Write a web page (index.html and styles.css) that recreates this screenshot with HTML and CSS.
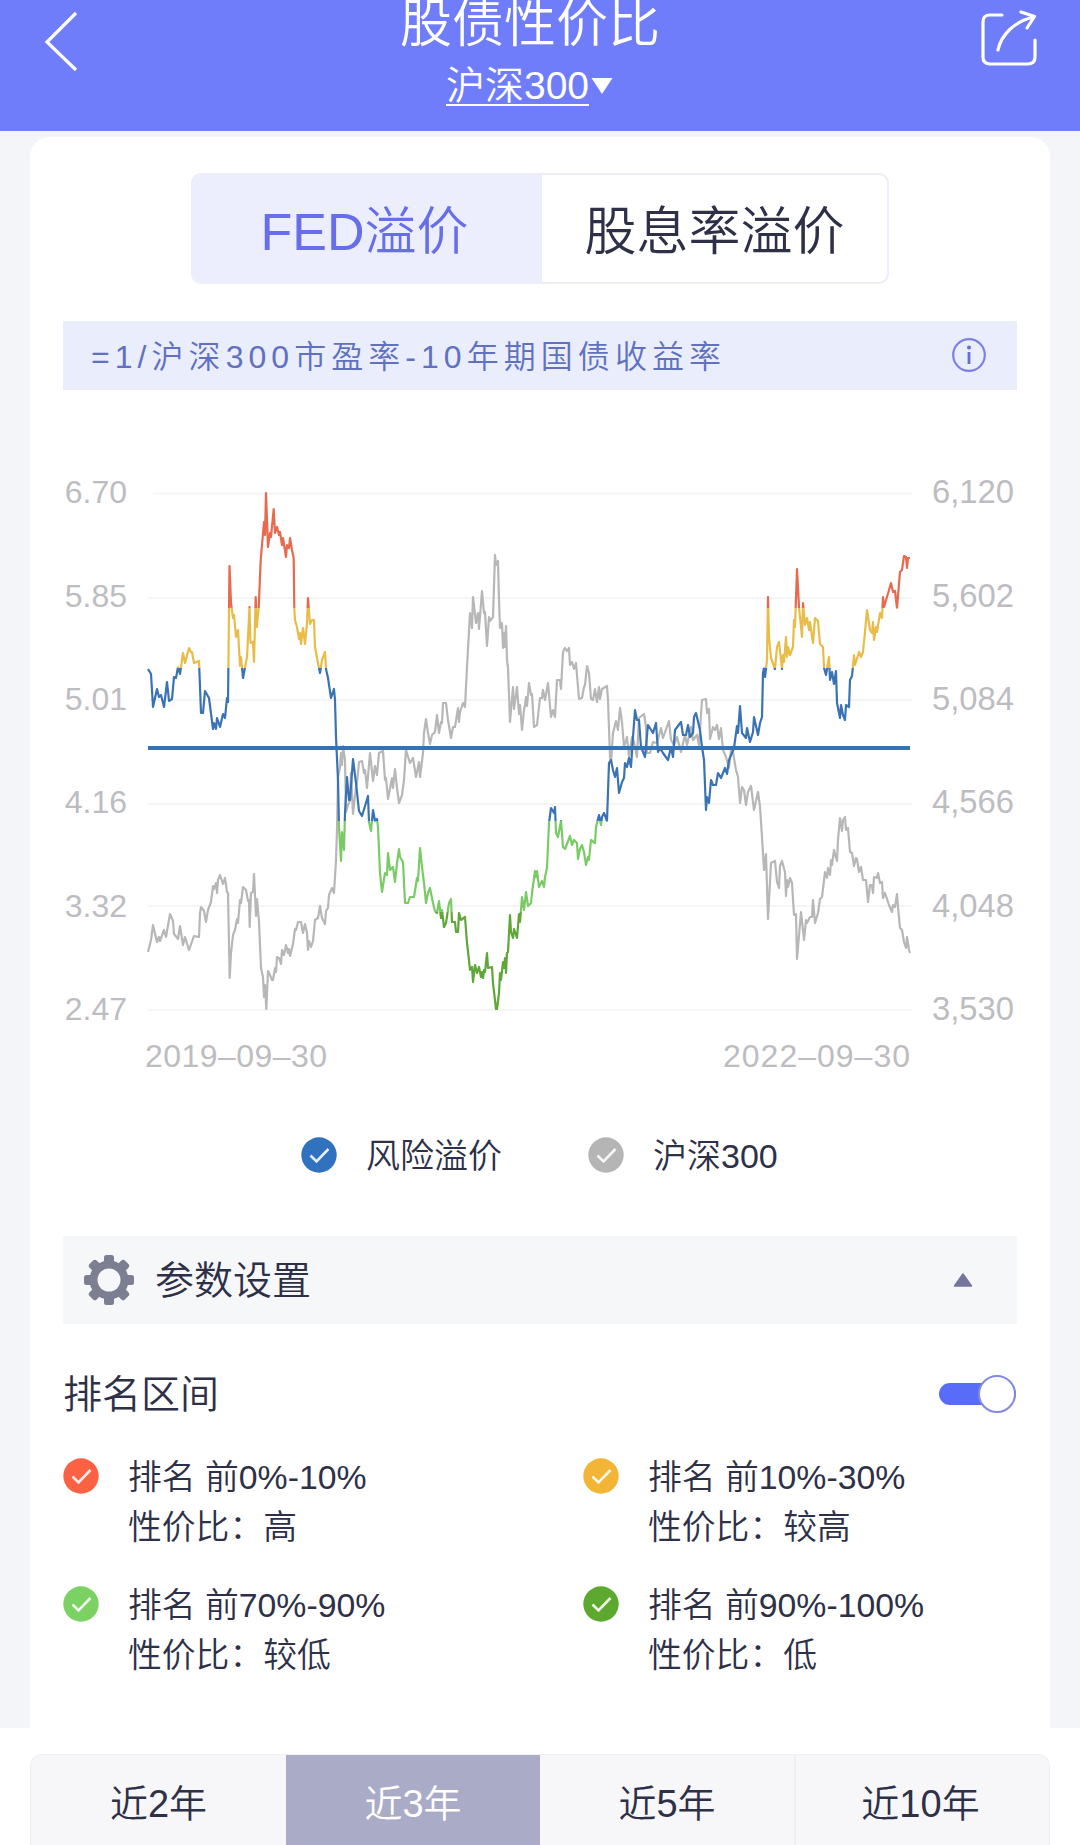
FILE: index.html
```html
<!DOCTYPE html>
<html lang="zh-CN">
<head>
<meta charset="utf-8">
<meta name="viewport" content="width=1080">
<title>股债性价比</title>
<link rel="stylesheet" href="styles.css">
</head>
<body>
<svg class="defs" width="0" height="0" aria-hidden="true">
  <symbol id="check" viewBox="0 0 36 36"><circle cx="18" cy="18" r="17.7" fill="currentColor"/><path d="M9.5 18.500l6 6L27.500 12" fill="none" stroke="#fff" stroke-opacity=".88" stroke-width="2.600"/></symbol>
</svg>
<header class="header">
  <svg class="back" width="40" height="72" viewBox="0 0 40 72"><path d="M35 13L6 42l29 28" fill="none" stroke="#fff" stroke-width="3.200"/></svg>
  <div class="heading">
    <h1>股债性价比</h1>
    <div class="index"><span class="index-name">沪深300</span><svg width="24" height="18" viewBox="0 0 24 18"><path d="M1.500 1h21L12 17z" fill="#fff"/></svg></div>
  </div>
  <svg class="share" width="64" height="72" viewBox="978 0 64 72" fill="none" stroke="#fff" stroke-width="3.200" stroke-linecap="round" stroke-linejoin="round"><path d="M1002 15h-12q-7 0-7 7v35q0 7 7 7h38q7 0 7-7V40M998 50C1001 35 1014 22 1033 17M1021 12l13.500 4.500L1027 28"/></svg>
</header>
<main class="card">
  <nav class="tabs"><a class="tab active">FED溢价</a><a class="tab">股息率溢价</a></nav>
  <div class="formula"><span>=1/沪深300市盈率-10年期国债收益率</span>
    <svg width="36" height="36" viewBox="0 0 36 36"><circle cx="18" cy="17" r="15.800" fill="none" stroke="#7b80e2" stroke-width="2.200"/><circle cx="18" cy="9.500" r="2" fill="#666dd9"/><path d="M18 14V26" stroke="#666dd9" stroke-width="2.800"/></svg>
  </div>
  <svg class="chart" width="1020" height="640" viewBox="30 440 1020 640">
    <defs>
      <linearGradient id="rank" gradientUnits="userSpaceOnUse" x1="0" y1="400" x2="0" y2="1100">
        <stop offset=".297" stop-color="#e8694e"/><stop offset=".297" stop-color="#e9bc48"/>
        <stop offset=".383" stop-color="#e9bc48"/><stop offset=".383" stop-color="#3973b3"/>
        <stop offset=".601" stop-color="#3973b3"/><stop offset=".601" stop-color="#7acb66"/>
        <stop offset=".732" stop-color="#7acb66"/><stop offset=".732" stop-color="#61a638"/>
      </linearGradient>
    </defs>
    <path class="grid" d="M153 493.500H912M148 598H912M148 700H912M148 804H912M148 906H912M148 1010H912"/>
    <g class="axis left" text-anchor="end"><text x="127" y="503">6.70</text><text x="127" y="607">5.85</text><text x="127" y="710">5.01</text><text x="127" y="813">4.16</text><text x="127" y="916.500">3.32</text><text x="127" y="1019.500">2.47</text></g>
    <g class="axis right"><text x="932" y="503">6,120</text><text x="932" y="607">5,602</text><text x="932" y="710">5,084</text><text x="932" y="813">4,566</text><text x="932" y="916.500">4,048</text><text x="932" y="1019.500">3,530</text></g>
    <g class="axis"><text x="145" y="1067" textLength="182">2019–09–30</text><text x="723" y="1067" textLength="187">2022–09–30</text></g>
    <polyline class="series" stroke="#b7b7b7" points="148,952 151,940 153,925 157,942 159,937 160,941 164,930 166,937 170,914 173,921 174,934 178,939 180,926 183,945 185,937 189,950 194,936 199,937 200,913 201,907 204,911 206,922 208,910 211,902 213,886 214,889 216,883 217,893 218,880 220,875 223,884 225,878 227,892 228,893 229.7,978 231,953 233,935 235,930 237,919 238,923 240,900 241,903 243,887 246,890 248,901 249,900 249.7,927 251,893 253,892 254,874 256,916 257,899 259,922 261,968 263,977 264,997 265,985 266.3,1009 268,971 270,975 272,980 273,980 275,968 276,972 277,957 279,958 281,964 282,950 284,955 286,945 288,953 289,949 290,956 293,944 295,929 296,930 298,922 301,922 303,933 305,924 307,933 308,950 309,941 311,947 313,941 315,920 318,918 320,906 322,918 325,924 326,911 328,908 329,895 332,888 334,893 336,860 337,830 338,777 340,767 341,753 342,765 343,746 345,760 346,812 348,805 350,800 351,773 353,814 356,787 357,783 359,762 362,761 364,773 365,770 367,788 370,753 373,781 375,766 377,775 379,753 383,751 385,780 386,778 388,799 392,778 393,788 395,769 397,788 399,803 402,795 404,780 406,750 410,763 413,758 416,777 419,762 420,777 423,753 424,733 426,719 428,733 430,744 432,735 435,732 437,715 439,733 441,722 442,723 443,703 446,703 448,720 451,738 453,727 455,727 458,708 459,722 460,712 463,703 465,707 467,667 470,613 472,628 473,597 476,623 478,613 479,629 482,591 484,613 485,612 487,646 489,617 490,621 493,617 495,555 496,565 498,561 499,600 500,628 502,623 503,648 504,633 505,647 506,626 507,660 508,668 510,722 513,687 514,709 517,687 519,714 520,705 522,730 524,710 525,705 526,697 527,706 529,683 531,695 532,694 534,727 537,725 540,698 542,698 543,690 545,700 548,683 551,717 553,710 555,717 557,680 560,680 561,689 563,652 565,648 567,651 569,648 570,665 572,662 574,669 576,663 579,699 582,698 584,687 585,685 587,666 589,673 591,699 593,700 595,689 597,702 599,687 600,699 602,689 607,686 608,700 610,757 611,763 613,733 616,721 618,730 620,708 622,722 624,747 627,737 629,757 632,737 634,742 637,757 639,718 644,714 646,727 647,753 650,753 653,742 657,743 661,728 663,738 669,721 671,740 674,745 677,737 681,752 685,735 687,745 691,727 693,740 697,735 699,745 702,700 706,699 707,713 709,709 710,739 713,727 715,730 717,725 719,739 721,728 723,750 726,757 729,768 731,750 733,752 736,770 738,777 740,803 742,787 744,790 746,805 748,792 751,786 753,802 754,810 758,792 760,807 762,837 764,870 766,854 768,919 771,863 775,861 777,882 779,888 780,866 782,861 785,872 786,896 787,880 788,887 790,878 792,883 794,915 796,914 797,959 801,912 804,940 806,920 807,923 810,917 812,917 813,900 815,923 818,913 820,899 822,897 825,872 827,878 828,868 830,875 831,860 832,865 834,850 837,861 838,840 840,818 842,831 843,820 845,817 846,830 848,828 850,852 852,853 854,866 856,858 857,859 859,872 861,867 863,880 866,880 868,902 870,885 872,885 873,893 874,877 877,878 878,873 880,883 882,882 883,898 885,893 889,905 892,912 893,905 895,907 897,894 898,907 900,928 902,930 904,942 906,948 907,937 909,950 910,953"/>
    <polyline class="series" stroke="url(#rank)" points="148,669 151,674 153,707 157,689 159,697 161,695 164,707 167,682 169,701 172,699 174,677 176,678 178,667 180,674 183,653 185,663 189,648 191,652 192,652 194,663 199,661 201,713 203,713 205,691 209,698 213,729 214,723 216,729 217,718 220,727 223,714 225,718 227,698 228,702 229.5,566 231,603 233,618 234,615 236,637 238,630 240,666 241,657 243,678 247,657 249.5,607 250.5,643 253,642 254,662 255.7,597 256.7,627 258.7,608 260.7,560 264,522 265,535 266,493 268,547 270,533 271,537 273.7,509 275,533 277,527 279,535 280,532 282,545 283,538 286,557 287,545 289,548 290,538 292,550 293.7,558 294.3,608 295,620 297,627 299,639 300,633 301,644 303,628 305,644 307,623 308,598 310,624 312,620 314,620 315,647 317,658 320,673 322,660 325,652 326,669 328,678 331,698 334,689 335,700 336,737 338,780 339,827 341,861 342,832 344,850 345,813 347,777 349,800 350,800 353,759 356,783 357,792 359,811 362,816 368,796 369,822 371,831 373,810 375,821 377,819 378,827 380,873 382,892 385,873 387,875 388,853 390,870 393,867 395,882 397,863 399,849 400,857 403,862 405,903 408,903 410,897 414,897 417,878 418,881 420,848 422,867 424,883 426,903 428,893 430,888 433,903 435,911 437,913 439,901 441,918 442,910 444,927 446,923 449,903 451,899 452,922 455,922 456,932 458,932 459,913 461,920 465,917 467,943 469,960 470,970 472,967 473,982 475,965 477,973 479,967 481,977 482,972 483,978 484,970 485,972 487,953 488,968 492,967 493,983 496,1009 497,1009 499,993 500,973 501,980 503,962 504,968 505,958 506,973 507,953 508,952 510,915 511,932 513,938 514,929 517,938 519,914 520,922 522,897 524,910 526,892 528,906 531,903 532,893 535,871 536,877 537,871 539,887 542,881 544,887 545,877 547,868 549,823 551,808 554,813 555,807 556,833 558,837 561,821 563,847 565,849 570,836 572,845 574,840 577,843 578,859 580,849 582,845 584,852 586,865 588,857 589,860 591,840 595,843 596,827 599,815 601,825 602,817 604,813 607,821 609,763 611,760 613,770 615,777 617,768 619,793 622,782 624,778 625,763 627,767 629,758 631,767 633,737 635,710 637,720 639,720 641,747 645,757 648,725 653,733 656,723 658,752 660,748 663,753 668,760 671,747 673,757 675,730 681,722 683,735 686,735 688,725 690,737 693,733 694,717 696,713 700,730 702,747 704,760 706,810 707,797 709,803 711,780 713,785 716,785 718,773 721,778 725,768 727,774 729,760 734,748 737,726 738,733 740,706 742,733 746,738 747,728 750,742 753,732 754,717 758,735 760,723 762,717 763,673 764,668 765,677 767,660 768,597 769,637 771,658 775,669 777,647 779,642 782,669 783,655 784,662 786,637 787,657 788,647 790,655 793,647 794,620 795,627 797,569 799,607 802,637 803,603 805,625 807,618 809,630 810,622 813,643 815,618 818,621 820,644 823,647 824,668 826,675 829,657 830,680 832,672 834,684 836,671 837,703 840,718 841,705 843,715 845,720 846,705 849,707 850,680 852,676 854,655 855,665 859,652 861,657 863,652 865,632 867,610 870,630 872,633 873,622 874,640 876,627 877,632 880,613 882,618 883,597 884,607 887,597 891,583 893,592 895,591 897,608 900,572 902,570 904,556 906,557 907,568 908,558 910,558"/>
    <path d="M148 748H910" stroke="#3472b6" stroke-width="4"/>
  </svg>
  <div class="legend">
    <div class="legend-item blue"><svg class="dot"><use href="#check"/></svg><span>风险溢价</span></div>
    <div class="legend-item gray"><svg class="dot"><use href="#check"/></svg><span>沪深300</span></div>
  </div>
  <div class="settings">
    <svg width="52" height="52" viewBox="-26 -26 52 52"><g fill="#7c7e91"><circle r="19.500"/><rect x="-5" y="-25" width="10" height="50" rx="2.500"/><rect x="-5" y="-25" width="10" height="50" rx="2.500" transform="rotate(45)"/><rect x="-5" y="-25" width="10" height="50" rx="2.500" transform="rotate(90)"/><rect x="-5" y="-25" width="10" height="50" rx="2.500" transform="rotate(135)"/></g><circle r="11.500" fill="#f6f7f8"/></svg>
    <span>参数设置</span>
    <svg class="collapse" width="20" height="16" viewBox="0 0 20 16"><path d="M10 2L18.500 14H1.500z" fill="#74759e" stroke="#74759e" stroke-width="1.500" stroke-linejoin="round"/></svg>
  </div>
  <div class="rank-head"><span>排名区间</span><div class="switch"><i class="knob"></i></div></div>
  <div class="ranks">
    <div class="rank red"><svg class="dot"><use href="#check"/></svg><p>排名 前0%-10%<br>性价比：高</p></div>
    <div class="rank yellow"><svg class="dot"><use href="#check"/></svg><p>排名 前10%-30%<br>性价比：较高</p></div>
    <div class="rank lime"><svg class="dot"><use href="#check"/></svg><p>排名 前70%-90%<br>性价比：较低</p></div>
    <div class="rank green"><svg class="dot"><use href="#check"/></svg><p>排名 前90%-100%<br>性价比：低</p></div>
  </div>
</main>
<footer class="footer"><nav class="periods"><a>近2年</a><a class="active">近3年</a><a>近5年</a><a>近10年</a></nav></footer>
</body>
</html>
```
FILE: styles.css
```css
* { box-sizing: border-box; }
body {
  margin: 0;
  width: 1080px;
  height: 1845px;
  overflow: hidden;
  background: #f4f5f9;
  color: #2e3048;
  font-family: "Liberation Sans", "Noto Sans CJK SC", sans-serif;
  font-weight: 350;
}
svg { display: block; flex: none; }
.defs { position: absolute; }
.header {
  display: flex;
  justify-content: space-between;
  height: 131px;
  padding: 0 38px 0 41px;
  background: #707dfb;
  color: #fff;
}
.heading { display: flex; flex-direction: column; align-items: center; margin-left: 1px; }
h1 { margin: -6px 0 0; height: 60px; font-size: 52px; line-height: 60px; font-weight: 350; }
.index { display: flex; align-items: center; gap: 1px; height: 63px; font-size: 39px; line-height: 46px; }
.index-name { border-bottom: 2px solid #fff; height: 41px; line-height: 41px; }
.card {
  height: 1591px;
  margin: 6px 30px 0;
  padding: 36px 33px 0;
  border-radius: 20px 20px 0 0;
  background: #fff;
}
.tabs {
  display: flex;
  width: 698px;
  height: 111px;
  margin: 0 auto 0 128px;
  border: 2px solid #ededf7;
  border-radius: 10px;
  overflow: hidden;
  font-size: 52px;
}
.tab { flex: 1; display: flex; align-items: center; justify-content: center; padding-bottom: 3px; }
.tab.active { flex: 0 0 349px; padding-right: 6px; background: #eceefd; color: #666eea; }
.formula {
  display: flex;
  align-items: center;
  justify-content: space-between;
  height: 69px;
  margin-top: 37px;
  padding: 0 30px 0 28px;
  background: #eaedfc;
  color: #6071c0;
  font-size: 32px;
  letter-spacing: 5.050px;
}
.formula span { padding-bottom: 4px; }
.chart { margin: 50px -33px 0; }
.grid { fill: none; stroke: #f5f5f5; stroke-width: 2; }
.axis { fill: #bdbdc1; font-size: 32px; }
.right { font-size: 32.800px; }
.series { fill: none; stroke-width: 2.200; stroke-linejoin: round; }
.legend { display: flex; gap: 86px; height: 50px; margin-top: 50px; padding-left: 238px; font-size: 34px; }
.legend-item { display: flex; align-items: center; gap: 29px; }
.legend-item span { padding-bottom: 4px; }
.dot { width: 36px; height: 36px; }
.blue .dot { color: #3072be; }
.gray .dot { color: #b5b5b5; }
.settings {
  display: flex;
  align-items: center;
  height: 88px;
  margin-top: 56px;
  padding: 0 44px 0 20px;
  background: #f6f7f8;
  font-size: 39px;
}
.settings span { margin-left: 20px; padding-bottom: 7px; }
.collapse { margin-left: auto; }
.rank-head { display: flex; align-items: center; justify-content: space-between; height: 60px; margin-top: 40px; font-size: 39px; }
.rank-head span { padding-bottom: 6px; }
.switch { display: flex; align-items: center; justify-content: flex-end; width: 77px; height: 22px; margin-right: 1px; border-radius: 11px; background: #596cf8; }
.knob { width: 38px; height: 38px; flex: none; border: 2px solid #8289e2; border-radius: 50%; background: #fff; }
.ranks { display: grid; grid-template-columns: 520px 1fr; grid-template-rows: 128px 128px; margin-top: 28px; }
.rank { display: flex; gap: 29px; font-size: 33.800px; line-height: 50px; }
.rank .dot { margin-top: 6px; }
.rank p { margin: 0; white-space: nowrap; }
.red .dot { color: #fb6243; }
.yellow .dot { color: #f2b535; }
.lime .dot { color: #7bd263; }
.green .dot { color: #5da82e; }
.footer { height: 117px; padding: 26px 30px 0; background: #fff; }
.periods { display: grid; grid-template-columns: 255px 254px 254px 1fr; height: 91px; border: 1px solid #f1f1f5; border-bottom: 0; border-radius: 12px 12px 0 0; overflow: hidden; background: #f7f7fa; font-size: 38px; }
.periods a { display: flex; align-items: center; justify-content: center; }
.periods a:last-child { padding-right: 4px; border-left: 2px solid #ededf2; }
.periods .active { background: #a9abc7; color: #fff; }
```
